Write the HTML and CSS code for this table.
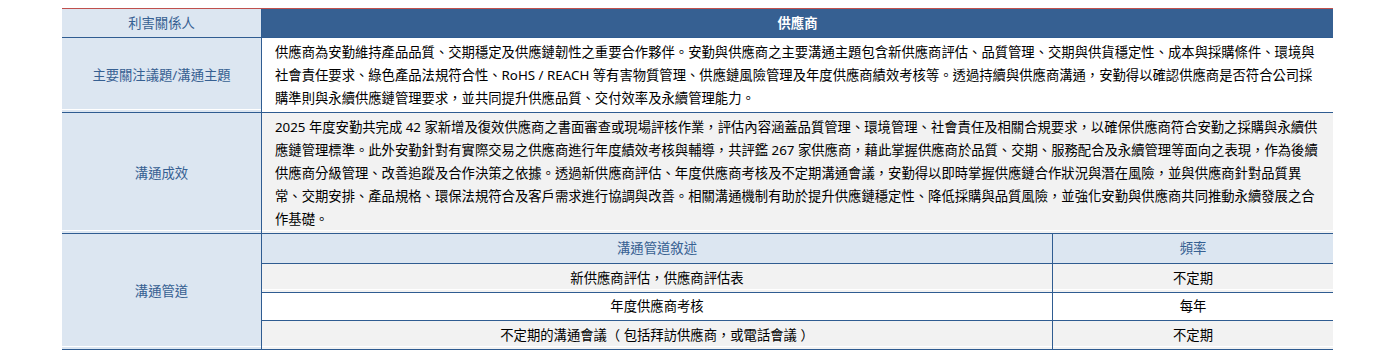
FILE: index.html
```html
<!DOCTYPE html>
<html lang="zh-Hant">
<head>
<meta charset="utf-8">
<title>供應商溝通</title>
<link rel="stylesheet" href="styles.css">
</head>
<body>
<div class="sheet">
  <div class="cell head-label">利害關係人</div>
  <div class="cell head-main">供應商</div>

  <div class="cell label">主要關注議題/溝通主題</div>
  <div class="cell body white">供應商為安勤維持產品品質、交期穩定及供應鏈韌性之重要合作夥伴。安勤與供應商之主要溝通主題包含新供應商評估、品質管理、交期與供貨穩定性、成本與採購條件、環境與社會責任要求、綠色產品法規符合性、RoHS / REACH 等有害物質管理、供應鏈風險管理及年度供應商績效考核等。透過持續與供應商溝通，安勤得以確認供應商是否符合公司採購準則與永續供應鏈管理要求，並共同提升供應品質、交付效率及永續管理能力。</div>

  <div class="cell label">溝通成效</div>
  <div class="cell body gray">2025 年度安勤共完成 42 家新增及復效供應商之書面審查或現場評核作業，評估內容涵蓋品質管理、環境管理、社會責任及相關合規要求，以確保供應商符合安勤之採購與永續供應鏈管理標準。此外安勤針對有實際交易之供應商進行年度績效考核與輔導，共評鑑 267 家供應商，藉此掌握供應商於品質、交期、服務配合及永續管理等面向之表現，作為後續供應商分級管理、改善追蹤及合作決策之依據。透過新供應商評估、年度供應商考核及不定期溝通會議，安勤得以即時掌握供應鏈合作狀況與潛在風險，並與供應商針對品質異常、交期安排、產品規格、環保法規符合及客戶需求進行協調與改善。相關溝通機制有助於提升供應鏈穩定性、降低採購與品質風險，並強化安勤與供應商共同推動永續發展之合作基礎。</div>

  <div class="cell label">溝通管道</div>
  <div class="nested">
    <div class="ncell nhead ncol1">溝通管道敘述</div>
    <div class="ncell nhead">頻率</div>
    <div class="ncell gray ncol1">新供應商評估，供應商評估表</div>
    <div class="ncell gray">不定期</div>
    <div class="ncell white ncol1">年度供應商考核</div>
    <div class="ncell white">每年</div>
    <div class="ncell gray ncol1">不定期的溝通會議（ 包括拜訪供應商，或電話會議 ）</div>
    <div class="ncell gray">不定期</div>
  </div>
</div>
</body>
</html>
```

FILE: styles.css
```css
* {
  box-sizing: border-box;
}

html, body {
  margin: 0;
  padding: 0;
  background: #ffffff;
}

body {
  padding: 8px 0 0 62px;
}

.sheet {
  width: 1271px;
  display: grid;
  grid-template-columns: 200px 1071px;
  grid-template-rows: 29px 75px 121px 116px;
  border-top: 1px solid #c0504d;
  font-family: "Noto Sans", "Noto Sans CJK TC", sans-serif;
  font-size: 13.33px;
  line-height: 23px;
  color: #000000;
}

.cell {
  border-bottom: 1px solid #2f5c91;
}

.head-label {
  background: #dce6f1;
  color: #366092;
  border-right: 1px solid #2f5c91;
  display: flex;
  align-items: center;
  justify-content: center;
}

.head-main {
  background: #366092;
  color: #ffffff;
  font-weight: 700;
  display: flex;
  align-items: center;
  justify-content: center;
}

.label {
  background: #dce6f1;
  color: #366092;
  border-right: 1px solid #2f5c91;
  display: flex;
  align-items: center;
  justify-content: center;
  box-shadow: inset 0 -2px 0 #dce6f1, inset 0 -3px 0 #ffffff;
}

.body {
  padding: 0 12px 0 13px;
  display: flex;
  align-items: center;
}

.white {
  background: #ffffff;
}

.gray {
  background: #f2f2f2;
  box-shadow: inset 0 -2px 0 #f2f2f2, inset 0 -3px 0 #ffffff;
}

.nested {
  display: grid;
  grid-template-columns: 791px 280px;
  grid-template-rows: 30px 29px 28px 29px;
}

.ncell {
  border-bottom: 1px solid #2f5c91;
  display: flex;
  align-items: center;
  justify-content: center;
}

.ncol1 {
  border-right: 1px solid #2f5c91;
}

.nhead {
  background: #dce6f1;
  color: #366092;
}
```
